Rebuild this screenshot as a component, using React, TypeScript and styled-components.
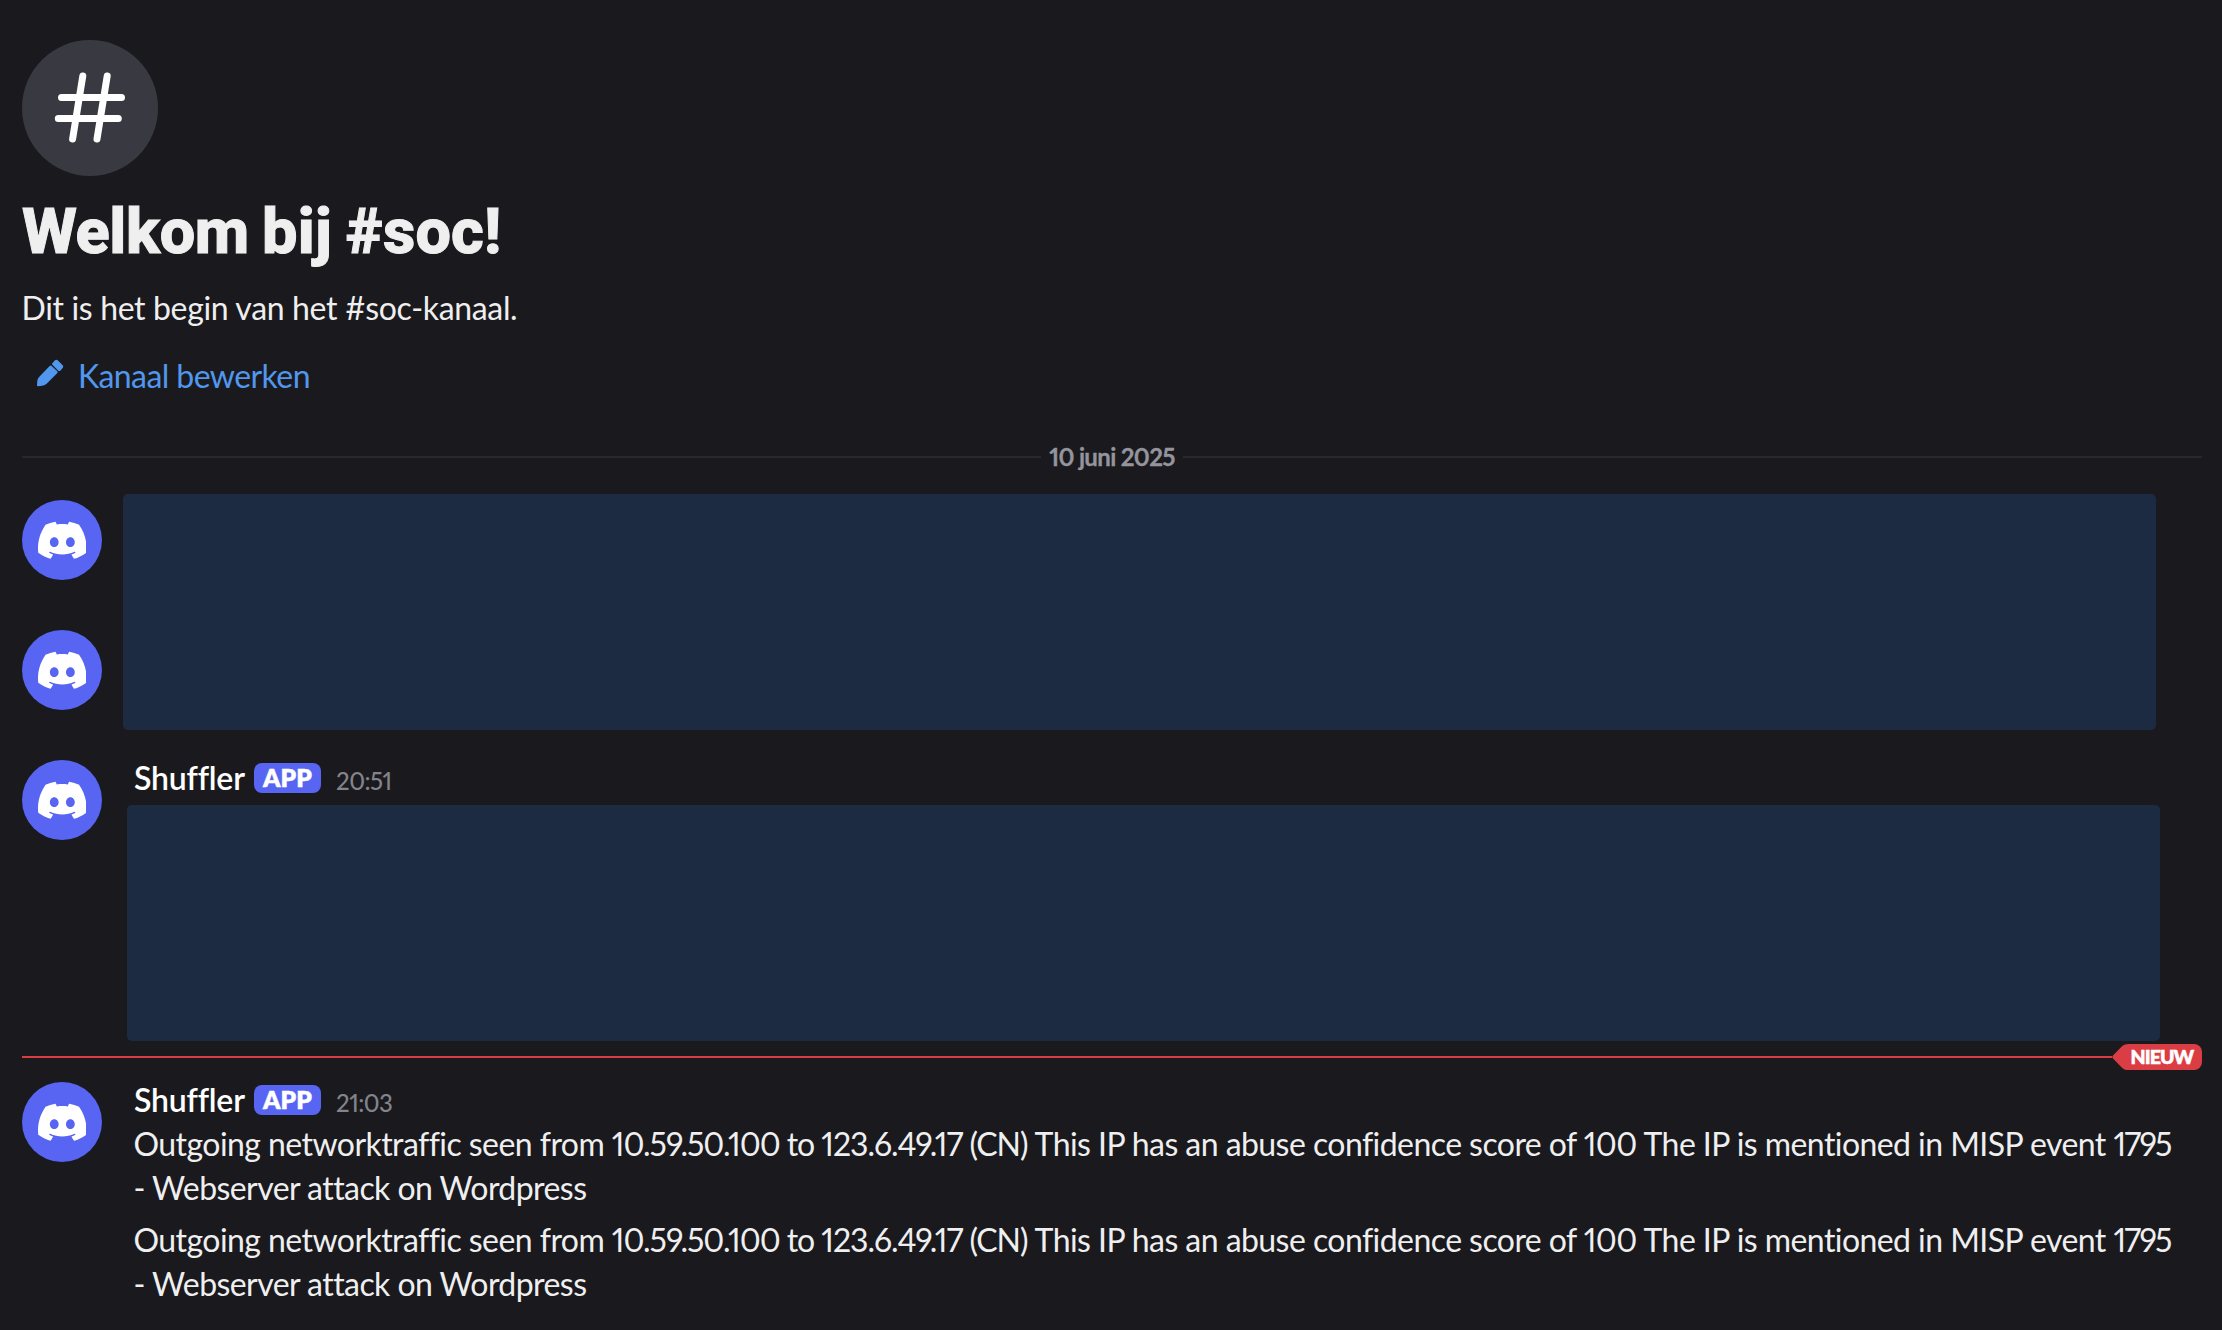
import React from "react";
import styled, { createGlobalStyle } from "styled-components";
import { SiDiscord } from "react-icons/si";

const GlobalStyle = createGlobalStyle`
  *, *::before, *::after { box-sizing: border-box; }
  body {
    margin: 0;
    background: #1a1a1e;
    color: #efeff0;
    font-family: "gg sans", Lato, "Noto Sans", sans-serif;
    font-variant-numeric: proportional-nums;
    font-variant-ligatures: none;
  }
`;

const Channel = styled.main`
  width: 2222px;
  height: 1330px;
  padding: 40px 20px 0 22px;
  overflow: hidden;
`;

const Welcome = styled.header`
  display: flex;
  flex-direction: column;
  align-items: flex-start;
`;

const ChannelIcon = styled.div`
  display: flex;
  align-items: center;
  justify-content: center;
  width: 136px;
  height: 136px;
  border-radius: 50%;
  background: #393941;
`;

const Title = styled.h1`
  margin: 16px 0 0;
  font-family: "gg sans", Roboto, sans-serif;
  font-size: 63px;
  line-height: 80px;
  font-weight: 800;
  letter-spacing: -0.4px;
  word-spacing: -2px;
  -webkit-text-stroke: 1px currentColor;
`;

const TitleTail = styled.span`
  letter-spacing: 0.2px;
`;

const Subtitle = styled.p`
  margin: 14px 0 0 -0.5px;
  font-size: 32px;
  line-height: 44px;
  letter-spacing: -0.35px;
  white-space: nowrap;
`;

const EditButton = styled.button`
  display: flex;
  align-items: flex-start;
  gap: 14px;
  margin: 24px 0 0;
  padding: 0 0 0 14px;
  border: 0;
  background: none;
  color: #5197ed;
  font: inherit;
  font-size: 32px;
  line-height: 44px;
  letter-spacing: -0.58px;

  svg { margin-top: 4px; }
`;

const DateDivider = styled.div`
  display: flex;
  align-items: center;
  height: 30px;
  margin-top: 44px;
`;

const Rule = styled.div`
  flex: 1;
  height: 2px;
  background: #29292d;
`;

const DateLabel = styled.span`
  padding: 0 8px 0 8px;
  color: #94949c;
  font-size: 24px;
  line-height: 30px;
  font-weight: 700;
  letter-spacing: -0.65px;
  -webkit-text-stroke: 0.3px currentColor;
`;

const Row = styled.article<{ $top: number; $gap: number }>`
  display: flex;
  gap: ${(p) => p.$gap}px;
  margin-top: ${(p) => p.$top}px;
`;

const AvatarColumn = styled.div<{ $top: number }>`
  display: flex;
  flex-direction: column;
  gap: 50px;
  padding-top: ${(p) => p.$top}px;
`;

const AvatarCircle = styled.div`
  display: flex;
  align-items: center;
  justify-content: center;
  width: 80px;
  height: 80px;
  border-radius: 50%;
  background: #5865f2;
  color: #fff;
`;

const Content = styled.div`
  flex: 1;
  min-width: 0;
`;

const RedactedBlock = styled.div<{ $shift?: number; $top?: number }>`
  width: 2033px;
  height: 236px;
  margin: ${(p) => p.$top ?? 0}px 0 0 ${(p) => p.$shift ?? 0}px;
  border-radius: 5px;
  background: #1d2b42;
`;

const MessageHeader = styled.div`
  display: flex;
  align-items: baseline;
  height: 45px;
  padding-top: 1px;
  line-height: 44px;
`;

const Author = styled.span`
  width: 120px;
  color: #fff;
  font-size: 32px;
  font-weight: 600;
  letter-spacing: -0.2px;
`;

const Badge = styled.span`
  display: flex;
  align-self: flex-start;
  justify-content: center;
  width: 67px;
  height: 30px;
  margin: 7px 15px 0 0;
  border-radius: 8px;
  background: #5865f2;
  color: #fff;
  font-size: 24.5px;
  line-height: 30px;
  font-weight: 800;
  letter-spacing: 0.2px;
  -webkit-text-stroke: 0.4px currentColor;
`;

const Time = styled.time`
  color: #83838b;
  font-size: 24px;
  font-weight: 500;
  letter-spacing: -0.5px;
`;

const MessageText = styled.p`
  width: 2050px;
  margin: 0 0 8px -0.5px;
  font-size: 32px;
  line-height: 44px;
  letter-spacing: -0.56px;
`;

const Digits = styled.span`
  letter-spacing: -1.06px;
`;

const EventId = styled.span`
  letter-spacing: -1.8px;
`;

const UnreadDivider = styled.div`
  display: flex;
  align-items: center;
  height: 26px;
  margin: 3px 0 7px;
`;

const UnreadRule = styled.div`
  flex: 1;
  height: 2px;
  background: #da3e44;
`;

const UnreadTag = styled.div`
  display: flex;
  align-items: stretch;
  height: 26px;
  color: #da3e44;
`;

const UnreadLabel = styled.span`
  width: 74px;
  margin-left: -1px;
  padding-left: 2.5px;
  border-radius: 0 8px 8px 0;
  background: #da3e44;
  color: #fff;
  font-size: 19.5px;
  line-height: 26px;
  font-weight: 900;
  letter-spacing: -0.9px;
  -webkit-text-stroke: 0.6px currentColor;
`;

function HashIcon() {
  return (
    <svg width="84" height="84" viewBox="0 0 84 84" fill="none" stroke="#fff" strokeWidth="7" strokeLinecap="round">
      <path d="M34.800 10 24.600 73M59.200 10 49 73M13.500 31.500h60M10.300 52.500h60" />
    </svg>
  );
}

function PencilIcon() {
  return (
    <svg width="28" height="29.33" viewBox="48 24 84 88" fill="currentColor">
      <path d="M97 40 105 31Q109 27 113 31L128 46Q132 50 128 54L121 62Q118 64 115 62L97 44Q95 42 97 40Z" />
      <path d="M89 48Q92 45.500 95 48L112 64Q114 66.500 112 69L80 101Q75 106 67 107L54 109Q51 109 51 106L52 92Q53 85 58 80Z" />
    </svg>
  );
}

function Avatar() {
  return (
    <AvatarCircle>
      <SiDiscord size={48.6} />
    </AvatarCircle>
  );
}

function Header({ time }: { time: string }) {
  return (
    <MessageHeader>
      <Author>Shuffler</Author>
      <Badge>APP</Badge>
      <Time>{time}</Time>
    </MessageHeader>
  );
}

function Alert() {
  return (
    <MessageText>
      Outgoing networktraffic seen from <Digits>10.59.50.100 to 123.6.49.17 (CN) </Digits>
      This IP has an abuse confidence score of 100 The IP is mentioned in MISP event <EventId>1795</EventId> - Webserver
      attack on Wordpress
    </MessageText>
  );
}

export default function App() {
  return (
    <Channel>
      <GlobalStyle />
      <Welcome>
        <ChannelIcon>
          <HashIcon />
        </ChannelIcon>
        <Title>
          Welkom <TitleTail>bij #soc!</TitleTail>
        </Title>
        <Subtitle>Dit is het begin van het #soc-kanaal.</Subtitle>
        <EditButton>
          <PencilIcon />
          Kanaal bewerken
        </EditButton>
      </Welcome>

      <DateDivider>
        <Rule />
        <DateLabel>10 juni 2025</DateLabel>
        <Rule />
      </DateDivider>

      <Row $top={22} $gap={21}>
        <AvatarColumn $top={6}>
          <Avatar />
          <Avatar />
        </AvatarColumn>
        <RedactedBlock />
      </Row>

      <Row $top={25} $gap={32}>
        <AvatarColumn $top={5}>
          <Avatar />
        </AvatarColumn>
        <Content>
          <Header time="20:51" />
          <RedactedBlock $top={5} $shift={-7} />
        </Content>
      </Row>

      <UnreadDivider>
        <UnreadRule />
        <UnreadTag>
          <svg width="17" height="26" viewBox="0 0 17 26" fill="currentColor">
            <path d="M17 0C13 0 11.500 .8 9.500 2.800L1 11.500Q-.4 13 1 14.500L9.500 23.200C11.500 25.200 13 26 17 26Z" />
          </svg>
          <UnreadLabel>NIEUW</UnreadLabel>
        </UnreadTag>
      </UnreadDivider>

      <Row $top={0} $gap={32}>
        <AvatarColumn $top={5}>
          <Avatar />
        </AvatarColumn>
        <Content>
          <Header time="21:03" />
          <Alert />
          <Alert />
        </Content>
      </Row>
    </Channel>
  );
}
